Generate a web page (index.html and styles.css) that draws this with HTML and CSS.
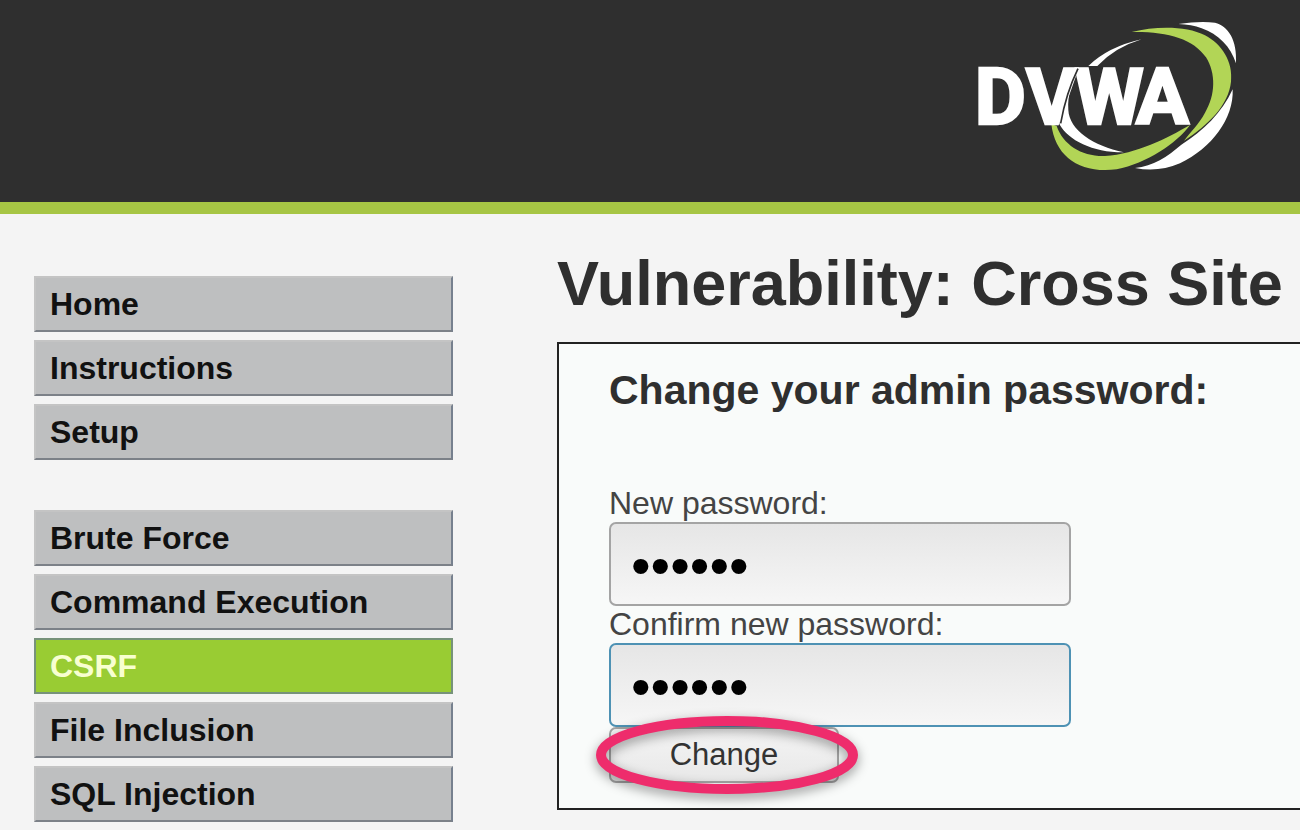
FILE: index.html
```
<!DOCTYPE html>
<html lang="en">
<head>
    <meta charset="UTF-8">
    <meta name="viewport" content="width=device-width, initial-scale=1.0">
    <title>Vulnerability: Cross Site</title>
    <link rel="stylesheet" href="styles.css">
</head>
<body>
    <header id="header">
        <svg class="logo" viewBox="0 0 900 510" role="img" aria-label="DVWA">
            <!-- white ring -->
            <path fill="#fff" d="M655 42 Q720 32 765 38 C805 48 832 90 828 160 C812 110 775 72 725 55 Q695 43 655 42Z"/>
            <path fill="#fff" d="M818 238 C822 325 755 415 660 460 Q595 488 525 474 C580 468 622 440 664 404 C730 362 785 310 818 238Z"/>
            <path fill="#fff" d="M545 88 Q465 112 412 168 L385 168 Q445 110 545 88Z"/>
            <path fill="#fff" d="M356 178 C335 215 322 255 325 300 C328 360 400 408 492 427 C400 428 325 392 298 342 C300 285 325 225 356 178Z"/>
            <!-- green ring -->
            <path fill="#b2d556" d="M515 66 C590 48 680 48 735 76 C785 102 820 155 813 215 C806 285 745 345 672 392 C690 368 717 342 735 308 C767 255 768 190 738 142 C700 86 620 64 515 66Z"/>
            <path fill="#b2d556" d="M274 342 L290 348 C310 405 365 440 435 438 C530 432 620 385 690 345 C650 400 560 460 470 478 C360 492 285 440 274 342Z"/>
            <text class="logo-text" x="44 198 344 528" y="341">DVWA</text>
            <path fill="none" stroke="#2f2f2f" stroke-width="5" d="M354 176 Q318 250 302 340"/>
        </svg>
    </header>

    <div id="container">
        <nav id="menu">
            <ul>
                <li><a href="#">Home</a></li>
                <li><a href="#">Instructions</a></li>
                <li><a href="#">Setup</a></li>
            </ul>
            <ul>
                <li><a href="#">Brute Force</a></li>
                <li><a href="#">Command Execution</a></li>
                <li><a class="selected" href="#">CSRF</a></li>
                <li><a href="#">File Inclusion</a></li>
                <li><a href="#">SQL Injection</a></li>
            </ul>
        </nav>

        <main id="main">
            <h1>Vulnerability: Cross Site</h1>
            <div class="vulnerable">
                <h3>Change your admin password:</h3>
                <form>
                    <label for="password-new">New password:</label>
                    <input type="password" id="password-new" value="secret">
                    <label for="password-conf">Confirm new password:</label>
                    <input class="active" type="password" id="password-conf" value="secret">
                    <div class="btn-box">
                        <button type="button">Change</button>
                        <svg class="ring" viewBox="0 0 262 78" aria-hidden="true">
                            <ellipse cx="131" cy="39" rx="126" ry="34"/>
                        </svg>
                    </div>
                </form>
            </div>
        </main>
    </div>
</body>
</html>
```

FILE: styles.css
```
*{
    box-sizing: border-box;
    padding: 0;
    margin: 0;
}

body{
    background: #f4f4f4;
    color: #2f2f2f;
    font-family: "Liberation Sans", Arial, sans-serif;
    font-size: 32px;
}

#header{
    display: flex;
    justify-content: flex-end;
    padding: 10px 40px 22px;
    background: #2f2f2f;
    border-bottom: 12px solid #a6c544;
}

.logo{
    width: 300px;
    height: 170px;
}

.logo-text{
    fill: #fff;
    stroke: #fff;
    stroke-width: 8;
    font-family: Roboto, sans-serif;
    font-size: 236px;
    font-weight: bold;
}

#container{
    display: flex;
    gap: 104px;
    padding-left: 34px;
}

#menu{
    flex: 0 0 419px;
    padding-top: 62px;
}

#menu ul{
    display: flex;
    flex-direction: column;
    gap: 8px;
    list-style: none;
}

#menu ul + ul{
    margin-top: 50px;
}

#menu a{
    display: block;
    padding: 0 14px;
    background: #bebfc0;
    border: 2px solid;
    border-color: #c4c4c4 #76808e #7c8188 #c4c4c4;
    color: #111;
    font-weight: bold;
    line-height: 52px;
    text-decoration: none;
}

#menu a.selected{
    background: #99cc33;
    border-color: #77927a;
    color: #f8ffd0;
}

#main{
    flex: 1;
    min-width: 0;
    padding-top: 33px;
}

h1{
    font-size: 63px;
    line-height: 72px;
    white-space: nowrap;
}

.vulnerable{
    margin-top: 23px;
    padding: 23px 50px 25px;
    background: #f9fbfa;
    border: 2px solid #222;
    border-right: 0;
}

h3{
    margin-bottom: 72px;
    font-size: 41px;
    line-height: 46px;
    white-space: nowrap;
}

label{
    display: block;
    color: #444;
    line-height: 37px;
}

input{
    display: block;
    width: 462px;
    max-width: 100%;
    height: 84px;
    padding: 2px 20px 0;
    background: linear-gradient(#e6e6e6, #f6f6f6);
    border: 2px solid #a4a4a4;
    border-radius: 7px;
    color: #000;
    font-family: inherit;
    font-size: 56px;
    outline: none;
}

input.active{
    border-color: #4e92b4;
}

.btn-box{
    position: relative;
    width: 230px;
}

button{
    display: block;
    width: 100%;
    height: 56px;
    background: linear-gradient(#f4f4f4, #e8e8e8);
    border: 2px solid #a4a4a4;
    border-radius: 7px;
    color: #333;
    font-family: inherit;
    font-size: 31px;
}

/* marker around the submit button */
.ring{
    position: absolute;
    top: -11px;
    left: -13px;
    width: 262px;
    height: 78px;
    overflow: visible;
    filter: drop-shadow(0 4px 6px rgba(0, 0, 0, .4));
    pointer-events: none;
}

.ring ellipse{
    fill: none;
    stroke: #ee2c6c;
    stroke-width: 10;
}
```
